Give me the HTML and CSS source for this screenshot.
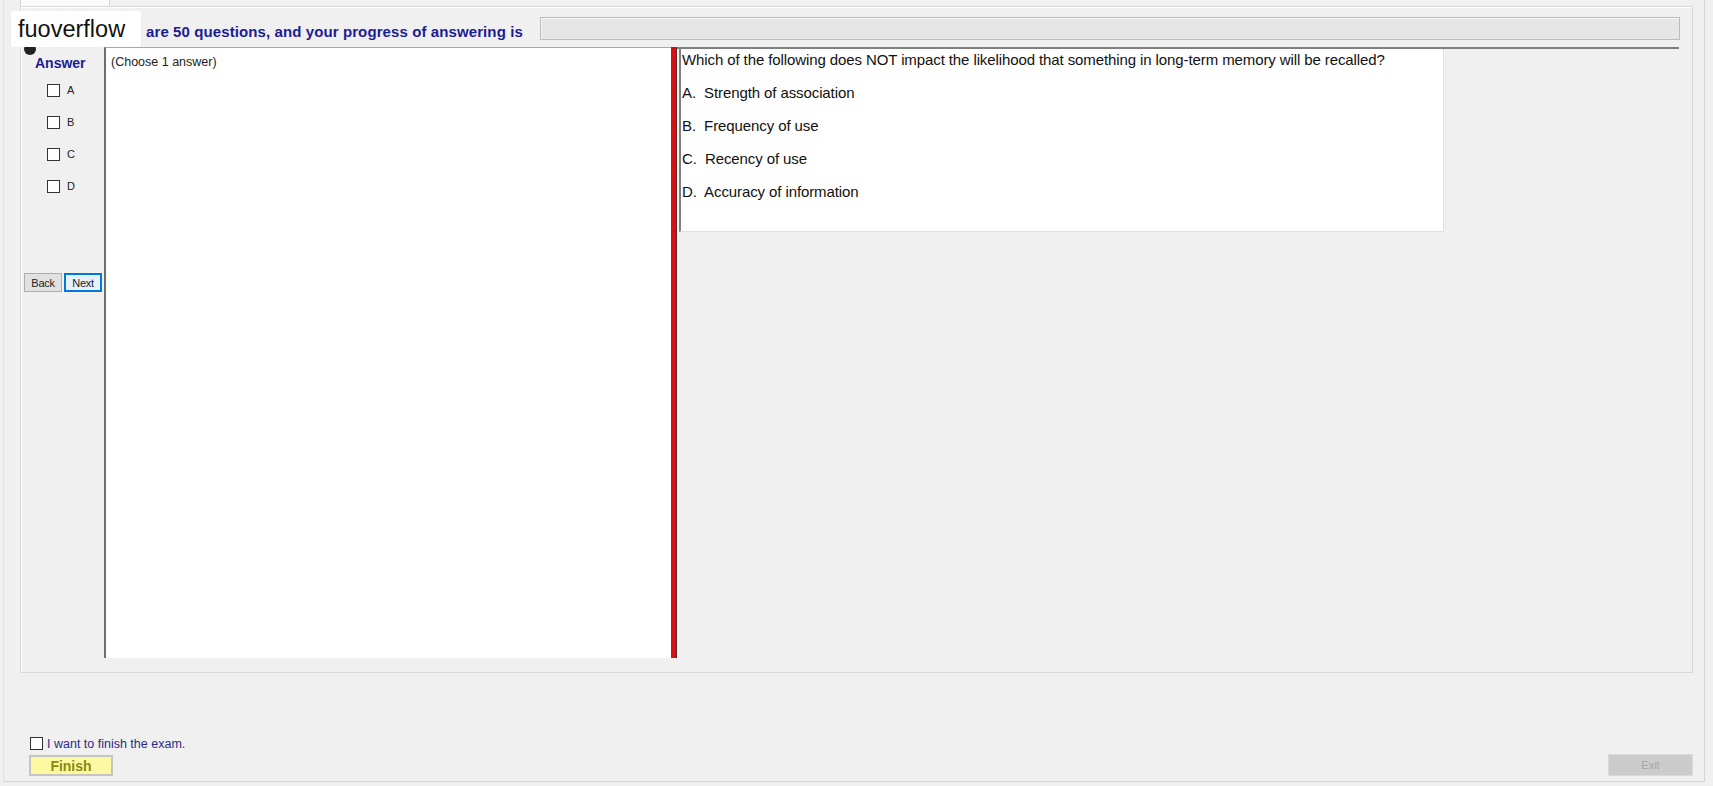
FILE: index.html
```html
<!DOCTYPE html>
<html>
<head>
<meta charset="utf-8">
<link rel="stylesheet" href="styles.css">
</head>
<body>
<div class="window">
  <div class="tabstrip"><div class="tab"></div></div>
  <div class="frame">
    <div class="header">
      <div class="progress-text">are 50 questions, and your progress of answering is</div>
      <div class="progress-bar"></div>
    </div>
    <div class="main">
      <div class="answer-col">
        <div class="answer-title">Answer</div>
        <div class="choices">
          <label class="choice"><span class="box"></span><span>A</span></label>
          <label class="choice"><span class="box"></span><span>B</span></label>
          <label class="choice"><span class="box"></span><span>C</span></label>
          <label class="choice"><span class="box"></span><span>D</span></label>
        </div>
        <div class="nav">
          <button class="btn">Back</button>
          <button class="btn btn-focus">Next</button>
        </div>
      </div>
      <div class="panel">
        <div class="notes">(Choose 1 answer)</div>
        <div class="splitter"></div>
        <div class="question-area">
          <div class="question-box">
            <div class="question">Which of the following does NOT impact the likelihood that something in long-term memory will be recalled?</div>
            <div class="options">
              <div class="option">A.&nbsp; Strength of association</div>
              <div class="option">B.&nbsp; Frequency of use</div>
              <div class="option">C.&nbsp; Recency of use</div>
              <div class="option">D.&nbsp; Accuracy of information</div>
            </div>
          </div>
        </div>
      </div>
    </div>
  </div>
  <div class="footer">
    <label class="finish-check"><span class="box"></span><span>I want to finish the exam.</span></label>
    <div class="footer-buttons">
      <button class="finish">Finish</button>
      <button class="exit">Exit</button>
    </div>
  </div>
</div>
<div class="icon-dot"></div>
<div class="watermark">fuoverflow</div>
</body>
</html>
```
FILE: styles.css
```css
html, body {
  margin: 0;
  padding: 0;
  background: #f0f0f0;
  font-family: "Liberation Sans", Arial, sans-serif;
  width: 1713px;
  height: 786px;
  overflow: hidden;
}

.window {
  margin-left: 3px;
  width: 1702px;
  height: 782px;
  box-sizing: border-box;
  border-left: 1px solid #e2e2e2;
  border-right: 1px solid #d6d6d6;
  border-bottom: 1px solid #d6d6d6;
  display: flex;
  flex-direction: column;
}

.tabstrip {
  height: 6px;
  padding-left: 16px;
}

.tab {
  width: 90px;
  height: 6px;
  box-sizing: border-box;
  background: #fbfbfb;
  border-left: 1px solid #d4d4d4;
  border-right: 1px solid #d4d4d4;
}

.frame {
  margin-left: 16px;
  width: 1673px;
  height: 667px;
  box-sizing: border-box;
  border: 1px solid #d8d8d8;
  box-shadow: inset 1px 1px 0 #ffffff;
  display: flex;
  flex-direction: column;
}

.header {
  height: 40px;
  box-sizing: border-box;
  display: flex;
  align-items: flex-end;
  padding: 0 12px 7px 125px;
}

.progress-text {
  font-size: 15px;
  font-weight: bold;
  line-height: 17px;
  letter-spacing: 0.1px;
  color: #1c1c96;
  white-space: nowrap;
  margin-bottom: 0;
}

.progress-bar {
  flex: 1;
  margin-left: 17px;
  height: 23px;
  box-sizing: border-box;
  background: #e6e6e6;
  border: 1px solid #bcbcbc;
  box-shadow: inset 1px 1px 0 #f4f4f4;
}

.main {
  display: flex;
  height: 611px;
  padding-left: 3px;
}

.answer-col {
  width: 80px;
  display: flex;
  flex-direction: column;
}

.answer-title {
  padding: 8px 0 0 11px;
  font-size: 14px;
  line-height: 16px;
  font-weight: bold;
  color: #1c1c96;
}

.choices {
  margin-top: 3px;
  padding-left: 23px;
  display: flex;
  flex-direction: column;
}

.choice {
  height: 32px;
  display: flex;
  align-items: center;
  gap: 7px;
  font-size: 11px;
  color: #222;
}

.box {
  width: 13px;
  height: 13px;
  box-sizing: border-box;
  border: 1px solid #333333;
  background: #ffffff;
  display: inline-block;
}

.nav {
  margin-top: 71px;
  display: flex;
  gap: 2px;
}

.btn {
  width: 38px;
  height: 19px;
  box-sizing: border-box;
  padding: 0;
  margin: 0;
  font-family: "Liberation Sans", Arial, sans-serif;
  font-size: 11px;
  color: #222;
  background: #e1e1e1;
  border: 1px solid #adadad;
  letter-spacing: -0.3px;
}

.btn-focus {
  border: 2px solid #0078d7;
  background: #e5f1fb;
}

.panel {
  width: 1575px;
  display: flex;
}

.notes {
  width: 567px;
  box-sizing: border-box;
  background: #ffffff;
  border-left: 2px solid #6e6e6e;
  border-top: 1px solid #a8a8a8;
  padding: 7px 0 0 5px;
  font-size: 12.5px;
  line-height: 15px;
  color: #222;
}

.splitter {
  width: 5px;
  background: #d81010;
  border-right: 1px solid #5b2b2b;
}

.question-area {
  flex: 1;
  border-top: 2px solid #7f7f7f;
  padding-left: 2px;
}

.question-box {
  width: 765px;
  height: 183px;
  box-sizing: border-box;
  background: #ffffff;
  border-left: 2px solid #7f7f7f;
  border-right: 1px solid #e0e0e0;
  border-bottom: 1px solid #e0e0e0;
  padding: 2px 0 0 1px;
  font-size: 15px;
  letter-spacing: -0.1px;
  color: #111;
}

.question {
  line-height: 18px;
  white-space: nowrap;
}

.options {
  margin-top: 7px;
}

.option {
  height: 33px;
  line-height: 33px;
}

.footer {
  flex: 1;
  padding: 64px 11px 0 26px;
  display: flex;
  flex-direction: column;
}

.finish-check {
  display: flex;
  align-items: center;
  gap: 4px;
  height: 13px;
  font-size: 12.5px;
  color: #2a2a8c;
}

.footer-buttons {
  margin-top: 5px;
  display: flex;
  justify-content: space-between;
  align-items: flex-start;
}

.finish {
  margin-left: -1px;
  width: 84px;
  height: 21px;
  box-sizing: border-box;
  padding: 0;
  background: #fcf9a2;
  border: 2px solid #c4c4c4;
  font-family: "Liberation Sans", Arial, sans-serif;
  font-size: 14px;
  font-weight: bold;
  color: #8a8a10;
}

.exit {
  width: 85px;
  height: 22px;
  margin-top: -1px;
  box-sizing: border-box;
  padding: 0;
  background: #cccccc;
  border: 1px solid #dadada;
  font-family: "Liberation Sans", Arial, sans-serif;
  font-size: 11px;
  color: #a6a6a6;
}

.icon-dot {
  position: absolute;
  left: 24px;
  top: 43px;
  width: 12px;
  height: 12px;
  border-radius: 50%;
  background: #222;
}

.watermark {
  position: absolute;
  left: 11px;
  top: 11px;
  width: 130px;
  height: 36px;
  box-sizing: border-box;
  padding-left: 7px;
  background: #ffffff;
  border-radius: 3px;
  font-size: 23.5px;
  line-height: 36px;
  color: #111111;
}
```
